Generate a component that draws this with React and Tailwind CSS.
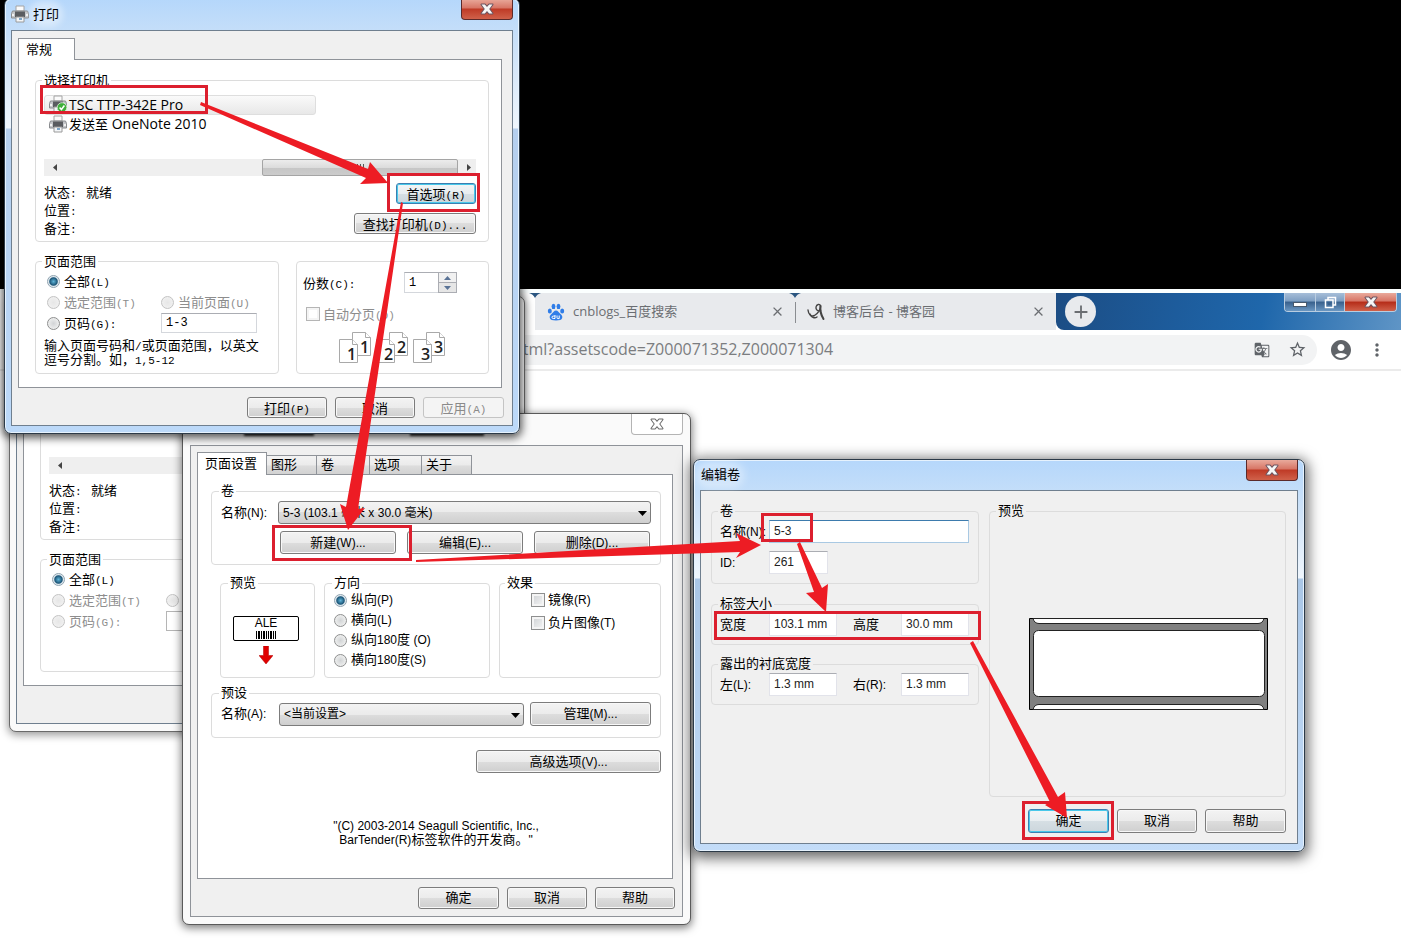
import React, { useId } from 'react';
import { MdAccountCircle, MdStarBorder, MdMoreVert, MdGTranslate, MdClose, MdAdd } from 'react-icons/md';

const SANS = "font-['Liberation_Sans','Noto_Sans_CJK_SC',sans-serif]";

/* Latin text set in the fixed-pitch face of the print dialog */
function Mono({ children }) {
  return <span className="font-['Liberation_Mono',monospace] text-[11px] leading-none">{children}</span>;
}

/* Latin text set in the proportional face of the label dialogs */
function Latin({ children }) {
  return <span className="font-['Liberation_Sans',sans-serif] text-[12px]">{children}</span>;
}

function Printer({ ready }) {
  return (
    <svg className="size-[18px] shrink-0" viewBox="0 0 18 18" aria-hidden="true">
      <path d="M5 1h8v5H5z" fill="#fbfbfb" stroke="#a4a4a4" />
      <path d="M1.500 6h15l1 2.500v4.500h-17V8.500z" fill="#c4c6c9" stroke="#8a8c8f" />
      <path d="M4 6.500h10v5.500H4z" fill="#5a5c60" />
      <path d="M1 9h2v2H1zM15 9h2v2h-2z" fill="#f2f2f2" />
      <path d="M5 12h8v5H5z" fill="#f4f6f8" stroke="#9a9a9a" />
      <path d="M8 13h3v2H8z" fill="#7fa6c8" />
      {ready && (
        <g>
          <circle cx="13" cy="12.500" r="4.800" fill="#3fae3a" stroke="#dff3dd" strokeWidth=".8" />
          <path d="M10.600 12.500l1.800 2 3-4" fill="none" stroke="#fff" strokeWidth="1.500" />
        </g>
      )}
    </svg>
  );
}

function Cross({ fill, stroke }) {
  return (
    <svg className="h-3 w-[14px]" viewBox="0 0 14 12" aria-hidden="true">
      <path
        d="M1.500 1.500h3.300L7 4l2.200-2.500h3.300L9.200 6l3.300 4.500H9.200L7 8l-2.200 2.500H1.500L4.800 6z"
        fill={fill}
        stroke={stroke}
        strokeWidth="2"
        strokeLinejoin="round"
        paintOrder="stroke"
      />
    </svg>
  );
}

function CloseButton({ active }) {
  const look = active
    ? 'border-[#5b2a2a] bg-[linear-gradient(180deg,#e9aa9c_0%,#d77565_45%,#bf3a26_50%,#d0614a_100%)]'
    : 'border-[#b4b4b4] bg-white';
  return (
    <button type="button" aria-label="关闭" className={`flex h-[21px] w-[52px] shrink-0 items-center justify-center rounded-b-[4px] border border-t-0 ${look}`}>
      {active ? <Cross fill="#f6f6f6" stroke="#6d5560" /> : <Cross fill="#ffffff" stroke="#6b6b6b" />}
    </button>
  );
}

function Button({ children, primary, disabled, className }) {
  const look = disabled
    ? 'border-[#c4c4c4] bg-[#f4f4f4] text-[#8a8a8a]'
    : primary
      ? 'border-[#3c7fb1] bg-[linear-gradient(180deg,#f2f5f6_0%,#e8edf0_50%,#d6dfe4_50%,#ccd6dc_100%)] shadow-[inset_0_0_0_1px_#48c8ea]'
      : 'border-[#7c7c7c] bg-[linear-gradient(180deg,#f3f3f3_0%,#ebebeb_50%,#dddddd_50%,#cfcfcf_100%)] shadow-[inset_0_0_0_1px_#f8f8f8]';
  return (
    <button type="button" disabled={disabled} className={`flex items-center justify-center rounded-[3px] border whitespace-nowrap ${look} ${className}`}>
      <span>{children}</span>
    </button>
  );
}

function Group({ title, className, children }) {
  return (
    <fieldset className={`rounded-[4px] border border-[#dcdcdc] ${className}`}>
      {title && <legend className="-ml-0.5 h-[18px] px-0.5 leading-[18px] whitespace-nowrap">{title}</legend>}
      {children}
    </fieldset>
  );
}

function Radio({ name, checked, disabled, children }) {
  return (
    <label className={`flex h-5 items-center gap-1 whitespace-nowrap ${disabled ? 'text-[#8d8d8d]' : ''}`}>
      <input
        type="radio"
        name={name}
        defaultChecked={checked}
        disabled={disabled}
        className="size-[13px] shrink-0 appearance-none rounded-full border border-[#8e8f8f] bg-[radial-gradient(circle,#d2d4d6_0%,#e9eaea_60%,#f8f8f8_100%)] checked:border-[#8fa3b0] checked:bg-[radial-gradient(circle,#5fb4d8_0%,#1c5678_48%,#dfe8ee_62%,#f4f6f8_100%)] disabled:border-[#c3c3c3] disabled:bg-[radial-gradient(circle,#e6e6e6_0%,#f4f4f4_100%)]"
      />
      <span>{children}</span>
    </label>
  );
}

function Check({ disabled, children }) {
  return (
    <label className={`flex h-5 items-center gap-[3px] whitespace-nowrap ${disabled ? 'text-[#8d8d8d]' : ''}`}>
      <input type="checkbox" disabled={disabled} className="size-[14px] shrink-0 appearance-none border border-[#8e8f8f] bg-[linear-gradient(135deg,#cdd0d3,#f6f6f6)] shadow-[inset_0_0_0_2px_#f4f4f4] disabled:border-[#b5b5b5] disabled:bg-none" />
      <span>{children}</span>
    </label>
  );
}

function Select({ label, option, className }) {
  return (
    <div className={`relative ${className}`}>
      <select aria-label={label} className="h-[23px] w-full appearance-none rounded-[3px] border border-[#7c7c7c] bg-[linear-gradient(180deg,#f3f3f3_0%,#ebebeb_50%,#dddddd_50%,#cfcfcf_100%)] px-1 text-[12px]">
        <option>{option}</option>
      </select>
      <svg className="pointer-events-none absolute top-[10px] right-1 h-[5px] w-[9px]" viewBox="0 0 9 5" aria-hidden="true">
        <path d="M0 0h9L4.500 5z" />
      </svg>
    </div>
  );
}

function PageStack({ n, x }) {
  return (
    <g transform={`translate(${x} 0)`}>
      <g fill="#fff" stroke="#a9a9a9">
        <path d="M13.500.5h13l5 5v18h-18z" />
        <path d="M26.500.5v5h5" />
        <path d="M.5 7.500h13l5 5v18H.5z" />
        <path d="M13.500 7.500v5h5" />
      </g>
      <g fontFamily="Open Sans, sans-serif" fontSize="16" fontWeight="600" fill="#222">
        <text x="8" y="28">{n}</text>
        <text x="21" y="21">{n}</text>
      </g>
    </g>
  );
}

function PrinterList() {
  return (
    <ul className="h-[46px] pt-1.5 font-['Open_Sans','Noto_Sans_CJK_SC',sans-serif] text-[14px]">
      <li className="flex h-5 w-[272px] items-center gap-0.5 rounded-[3px] border border-[#dedede] bg-[linear-gradient(180deg,#fafafa,#e8e8e8)] pb-0.5 pl-1">
        <Printer ready />TSC TTP-342E Pro
      </li>
      <li className="flex h-5 items-center gap-0.5 pb-0.5 pl-[5px]">
        <Printer />
        <span className="whitespace-pre"><span className="text-[13px]">发送至</span> OneNote 2010</span>
      </li>
    </ul>
  );
}

function Copies({ id }) {
  return (
    <>
      <div className="flex h-[21px] items-center">
        <label htmlFor={`${id}-copies`} className="w-[101px]">份数<Mono>(C):</Mono></label>
        <input id={`${id}-copies`} defaultValue="1" className="h-[21px] w-[34px] border border-r-0 border-[#d4d7dc] border-t-[#abadb3] px-1 font-['Liberation_Mono',monospace] text-[12px]" />
        <div className="flex h-[21px] w-[19px] flex-col border border-[#abadb3]">
          <button type="button" aria-label="增加" className="flex flex-1 items-center justify-center border-b border-[#abadb3] bg-[#f1f1f1]">
            <svg className="h-1 w-[7px]" viewBox="0 0 7 4"><path d="M0 4h7L3.500 0z" fill="#5a7396" /></svg>
          </button>
          <button type="button" aria-label="减少" className="flex flex-1 items-center justify-center bg-[#e6e6e6]">
            <svg className="h-1 w-[7px]" viewBox="0 0 7 4"><path d="M0 0h7L3.500 4z" fill="#5a7396" /></svg>
          </button>
        </div>
      </div>
      <div className="mt-[11px] pl-[3px]"><Check disabled>自动分页<Mono>(O)</Mono></Check></div>
      <svg className="mt-2 ml-[36px] h-8 w-[106px]" viewBox="0 0 106 32" aria-hidden="true">
        <PageStack n="1" x={0} /><PageStack n="2" x={37} /><PageStack n="3" x={74} />
      </svg>
    </>
  );
}

function PrintDialog({ active, className }) {
  const id = useId();
  const frame = active
    ? 'border-[#2c3a48] bg-[linear-gradient(180deg,#b5d7fb_0px,#cde2f8_50px,#eff6fd_129px,#b5cfee_130px,#bcd9f9_100%)] shadow-[inset_0_0_0_1px_#e6f2fd,0_2px_8px_2px_rgba(0,0,0,0.65)]'
    : 'border-[#6a6a6a] bg-[#fafafa] shadow-[0_2px_8px_1px_rgba(0,0,0,0.4)]';
  return (
    <section className={`absolute w-[516px] rounded-[7px] border px-1.5 pb-[7px] text-[13px] text-black ${frame} ${className} font-['Noto_Sans_CJK_SC',sans-serif]`}>
      <header className="flex h-[31px] items-start justify-between">
        {active && (
          <h2 className="flex h-[29px] items-center gap-1">
            <Printer />
            <span className="rounded-full bg-white/40 leading-[18px] shadow-[0_0_6px_4px_rgba(255,255,255,0.4)]">打印</span>
          </h2>
        )}
        <CloseButton active={active} />
      </header>
      <div className="border border-[#6f7f8f] bg-[#f0f0f0] pt-[7px] pr-2 pb-[7px] pl-1.5">
        <div role="tablist" className="flex">
          <button type="button" role="tab" className="relative z-10 -mb-px flex h-[22px] w-[57px] items-center border border-b-0 border-[#8f9399] bg-white pb-0.5 pl-[7px]">
            {active && '常规'}
          </button>
        </div>
        <div className="mr-0.5 border border-[#8f9399] bg-white pt-[11px] pr-3 pb-[13px] pl-4">
          <Group title={active ? '选择打印机' : ' '} className="pr-3 pb-1 pl-2">
            {active ? <PrinterList /> : <div className="h-[46px]" />}
            <div className="mt-6 flex h-[17px] items-center bg-[#efefef]">
              <svg className="ml-2 size-[7px]" viewBox="0 0 7 7" aria-hidden="true"><path d="M5 0v7L1 3.500z" fill="#444" /></svg>
              <div className="ml-[203px] flex h-[17px] w-[196px] items-center justify-center gap-0.5 rounded-[2px] border border-[#a5a5a5] bg-[linear-gradient(180deg,#ececec_0%,#dcdcdc_50%,#c6c6c6_55%,#cccccc_100%)]">
                <i className="h-[7px] w-px bg-[#555]" /><i className="h-[7px] w-px bg-[#555]" /><i className="h-[7px] w-px bg-[#555]" />
              </div>
              <svg className="ml-2 size-[7px]" viewBox="0 0 7 7" aria-hidden="true"><path d="M1 0v7l4-3.500z" fill="#444" /></svg>
            </div>
            <div className="mt-[7px] flex h-[54px] justify-between leading-[18px]">
              <dl className="grid grid-cols-[42px_auto] grid-rows-[18px_18px_18px]">
                <dt>状态<Mono>:</Mono></dt><dd>就绪</dd>
                <dt>位置<Mono>:</Mono></dt><dd />
                <dt>备注<Mono>:</Mono></dt><dd />
              </dl>
              {active && (
                <div className="flex flex-col items-end gap-[9px]">
                  <Button primary className="h-[21px] w-[80px]">首选项<Mono>(R)</Mono></Button>
                  <Button className="h-[21px] w-[122px]">查找打印机<Mono>(D)...</Mono></Button>
                </div>
              )}
            </div>
          </Group>
          <div className="mt-2.5 flex gap-[17px]">
            <Group title="页面范围" className="h-[122px] w-[244px] px-2">
              <div className="grid grid-cols-[114px_auto] gap-y-px pt-px pl-[3px]">
                <Radio name={id} checked>全部<Mono>(L)</Mono></Radio>
                <span />
                <Radio name={id} disabled>选定范围<Mono>(T)</Mono></Radio>
                <Radio name={id} disabled>{active && <>当前页面<Mono>(U)</Mono></>}</Radio>
                <Radio name={id} disabled={!active}>页码<Mono>(G):</Mono></Radio>
                <input aria-label="页码" defaultValue={active ? '1-3' : ''} disabled={!active} className="h-5 w-[96px] border border-[#d4d7dc] border-t-[#abadb3] bg-white px-1 font-['Liberation_Mono',monospace] text-[12px] disabled:border-[#b5b5b5]" />
              </div>
              {active && (
                <p className="mt-[5px] grid grid-rows-[14px_14px] leading-[14px] whitespace-nowrap">
                  <span>输入页面号码和<Mono>/</Mono>或页面范围，以英文</span>
                  <span>逗号分割。如，<Mono>1,5-12</Mono></span>
                </p>
              )}
            </Group>
            <Group className="mt-[9px] h-[113px] flex-1 px-1.5 pt-2.5">
              {active && <Copies id={id} />}
            </Group>
          </div>
        </div>
        <div className="mt-[9px] flex h-[21px] justify-end gap-2">
          {active && (
            <>
              <Button className="h-[21px] w-[80px]">打印<Mono>(P)</Mono></Button>
              <Button className="h-[21px] w-[80px]">取消</Button>
              <Button disabled className="h-[21px] w-[81px]">应用<Mono>(A)</Mono></Button>
            </>
          )}
        </div>
      </div>
    </section>
  );
}

function PropertiesDialog() {
  const id = useId();
  const idle = 'h-5 border border-l-0 border-[#8f9399] bg-[linear-gradient(180deg,#f3f3f3_0%,#ebebeb_50%,#dddddd_55%,#d2d2d2_100%)] pl-1 text-left leading-[18px]';
  return (
    <section className={`absolute top-[413px] left-[182px] w-[509px] rounded-[7px] border border-[#5a5a5a] bg-[#fafafa] px-[7px] pb-[7px] text-[13px] text-black shadow-[0_2px_9px_1px_rgba(0,0,0,0.5)] ${SANS}`}>
      <header className="flex h-[31px] items-start justify-between">
        <div className="mt-4 ml-[54px] flex gap-24" aria-hidden="true">
          <span className="h-1.5 w-[70px] bg-[#333] blur-[1px]" />
          <span className="h-1.5 w-[74px] bg-[#333] blur-[1px]" />
        </div>
        <CloseButton />
      </header>
      <div className="border border-[#8f9399] bg-[#f0f0f0] pt-1.5 pr-[7px] pb-[7px] pl-1.5">
        <div role="tablist" className="flex items-end">
          <button type="button" role="tab" aria-selected="true" className="relative z-10 h-[23px] w-[70px] border border-b-0 border-[#8f9399] bg-white pl-[7px] text-left whitespace-nowrap">页面设置</button>
          <button type="button" role="tab" className={`w-[50px] ${idle}`}>图形</button>
          <button type="button" role="tab" className={`w-[53px] ${idle}`}>卷</button>
          <button type="button" role="tab" className={`w-[52px] ${idle}`}>选项</button>
          <button type="button" role="tab" className={`w-[50px] ${idle}`}>关于</button>
        </div>
        <div className="-mt-px mr-0.5 border border-[#8f9399] bg-white pt-[7px] pr-[11px] pb-[31px] pl-[13px]">
          <Group title="卷" className="px-[9px] pb-2.5">
            <div className="flex items-center pt-px">
              <span className="w-[57px]">名称<Latin>(N):</Latin></span>
              <Select label="名称(N)" option="5-3 (103.1 毫米 x 30.0 毫米)" className="flex-1" />
            </div>
            <div className="mt-[7px] flex gap-[11px] pl-[59px]">
              <Button className="h-[23px] w-[116px]">新建<Latin>(W)...</Latin></Button>
              <Button className="h-[23px] w-[116px]">编辑<Latin>(E)...</Latin></Button>
              <Button className="h-[23px] w-[116px]">删除<Latin>(D)...</Latin></Button>
            </div>
          </Group>
          <div className="mt-[9px] flex gap-[9px] pl-[9px]">
            <Group title="预览" className="h-[104px] w-[95px] pr-3 pl-[9px]">
              <div className="mt-6 flex flex-col items-center">
                <div className="flex h-[25px] w-[66px] flex-col items-center rounded-[2px] border border-black pt-px">
                  <span className="text-[12px] leading-[11px]">ALE</span>
                  <svg className="mt-0.5 h-2 w-5" viewBox="0 0 20 8" aria-hidden="true">
                    <path d="M0 0h1v8H0zM2 0h2v8H2zM5 0h1v8H5zM7 0h2v8H7zM10 0h1v8h-1zM12 0h1v8h-1zM14 0h2v8h-2zM17 0h1v8h-1zM19 0h1v8h-1z" />
                  </svg>
                </div>
                <svg className="mt-[5px] h-[18px] w-[14px]" viewBox="0 0 14 18" aria-hidden="true">
                  <path d="M4.500 0h5v9.500H14L7 18 0 9.500h4.500z" fill="#e00000" stroke="#b00000" strokeWidth=".5" />
                </svg>
              </div>
            </Group>
            <Group title="方向" className="h-[104px] w-[166px] px-[9px]">
              <div className="-mt-0.5">
                <Radio name={id} checked>纵向<Latin>(P)</Latin></Radio>
                <Radio name={id}>横向<Latin>(L)</Latin></Radio>
                <Radio name={id}>纵向<Latin>180</Latin>度<Latin> (O)</Latin></Radio>
                <Radio name={id}>横向<Latin>180</Latin>度<Latin>(S)</Latin></Radio>
              </div>
            </Group>
            <Group title="效果" className="h-[104px] flex-1 px-[7px]">
              <div className="-mt-0.5 flex flex-col gap-[3px] pl-6">
                <Check>镜像<Latin>(R)</Latin></Check>
                <Check>负片图像<Latin>(T)</Latin></Check>
              </div>
            </Group>
          </div>
          <Group title="预设" className="mt-1.5 px-[9px] pb-[11px]">
            <div className="flex h-6 items-center">
              <span className="w-[58px]">名称<Latin>(A):</Latin></span>
              <Select label="名称(A)" option="<当前设置>" className="w-[245px]" />
              <Button className="ml-1.5 h-6 w-[121px]">管理<Latin>(M)...</Latin></Button>
            </div>
          </Group>
          <div className="mt-3 flex justify-end">
            <Button className="h-[23px] w-[185px]">高级选项<Latin>(V)...</Latin></Button>
          </div>
          <p className="mt-[46px] text-center leading-[14px]">
            <Latin>"(C) 2003-2014 Seagull Scientific, Inc.,</Latin><br />
            <Latin>BarTender(R)</Latin>标签软件的开发商。<Latin>"</Latin>
          </p>
        </div>
        <div className="mt-2 flex justify-end gap-2">
          <Button className="h-[22px] w-[81px]">确定</Button>
          <Button className="h-[22px] w-[80px]">取消</Button>
          <Button className="h-[22px] w-[80px]">帮助</Button>
        </div>
      </div>
    </section>
  );
}

function Field({ label, value, className, focus }) {
  return (
    <input
      aria-label={label}
      defaultValue={value}
      className={`h-[23px] border bg-white px-1 pb-0.5 text-[12px] text-[#222] ${focus ? 'border-[#a9c9e3] border-t-[#3d7bad]' : 'border-[#e2e3ea] border-t-[#abadb3]'} ${className}`}
    />
  );
}

function RollDialog() {
  return (
    <section className={`absolute top-[459px] left-[693px] w-[612px] rounded-[7px] border border-[#2c3a48] bg-[linear-gradient(180deg,#b5d7fb_0px,#cde2f8_50px,#eff6fd_118px,#a9c6e6_119px,#c3dcf8_100%)] px-1.5 pb-[7px] text-[13px] text-black shadow-[inset_0_0_0_1px_#e6f2fd,0_3px_14px_3px_rgba(0,0,0,0.6)] ${SANS}`}>
      <header className="flex h-[30px] items-start justify-between">
        <h2 className="mt-1.5 rounded-full bg-white/30 pl-px leading-[18px] shadow-[0_0_8px_4px_rgba(255,255,255,0.4)]">编辑卷</h2>
        <CloseButton active />
      </header>
      <div className="border border-[#6f7f8f] bg-[#f0f0f0] pt-[11px] pr-[11px] pb-2.5 pl-2.5">
        <div className="flex items-stretch gap-2.5">
          <div className="flex w-[268px] flex-col">
            <Group title="卷" className="px-2 pb-[9px]">
              <div className="flex items-center">
                <span className="w-[49px] whitespace-nowrap">名称<Latin>(N):</Latin></span>
                <Field label="名称(N)" value="5-3" focus className="relative w-[200px]" />
              </div>
              <div className="mt-2 flex items-center">
                <span className="w-[49px]"><Latin>ID:</Latin></span>
                <Field label="ID" value="261" className="w-[59px]" />
              </div>
            </Group>
            <Group title="标签大小" className="mt-[11px] px-2 pb-2">
              <div className="flex items-center">
                <span className="w-[49px]">宽度</span>
                <Field label="宽度" value="103.1 mm" className="w-[68px]" />
                <span className="ml-4 w-[48px]">高度</span>
                <Field label="高度" value="30.0 mm" className="w-[68px]" />
              </div>
            </Group>
            <Group title="露出的衬底宽度" className="mt-2.5 px-2 pb-2">
              <div className="flex items-center">
                <span className="w-[49px]">左<Latin>(L):</Latin></span>
                <Field label="左(L)" value="1.3 mm" className="w-[68px]" />
                <span className="ml-4 w-[48px]">右<Latin>(R):</Latin></span>
                <Field label="右(R)" value="1.3 mm" className="w-[68px]" />
              </div>
            </Group>
          </div>
          <Group title="预览" className="h-[295px] flex-1 px-2">
            <svg className="mt-[98px] ml-[31px] h-[92px] w-[239px]" viewBox="0 0 239 92" aria-hidden="true">
              <path d="M.5.5h238v91H.5z" fill="#808080" stroke="#000" />
              <path d="M4 .5c1 3.500 3 5 6 5h219c3 0 5-1.500 6-5z" fill="#fff" stroke="#222" />
              <path d="M4 91.500c1-3.500 3-5 6-5h219c3 0 5 1.500 6 5z" fill="#fff" stroke="#222" />
              <rect x="4.500" y="12.500" width="231" height="66" rx="5" fill="#fff" stroke="#222" />
            </svg>
          </Group>
        </div>
        <div className="mt-3 flex justify-end gap-2">
          <Button primary className="h-6 w-[81px]">确定</Button>
          <Button className="h-6 w-[80px]">取消</Button>
          <Button className="h-6 w-[81px]">帮助</Button>
        </div>
      </div>
    </section>
  );
}

function TabNotch() {
  return (
    <svg className="h-[5px] w-3 shrink-0 self-start" viewBox="0 0 12 5" aria-hidden="true">
      <path d="M0 0h12Q8 1 6 5 4 1 0 0z" fill="#2a5580" />
    </svg>
  );
}

function Browser() {
  return (
    <div className="bg-white font-['Open_Sans','Noto_Sans_CJK_SC',sans-serif] text-[#6b6e72]">
      <div className="flex h-[37px] bg-white pl-[529px]">
        <div className="flex w-[527px] shrink-0 bg-[linear-gradient(90deg,#ffffff_6px,#e8eaed_6px)] text-[13px]">
          <TabNotch />
          <div className="flex w-[248px] shrink-0 items-center pl-1.5">
            <svg className="size-[18px]" viewBox="0 0 18 18" aria-hidden="true">
              <g fill="#2f7de8">
                <ellipse cx="2.800" cy="8" rx="2" ry="2.600" />
                <ellipse cx="6.500" cy="3.400" rx="1.900" ry="2.700" />
                <ellipse cx="11.500" cy="3.400" rx="1.900" ry="2.700" />
                <ellipse cx="15.200" cy="8" rx="2" ry="2.600" />
                <path d="M9 7.500c2 0 2.800 2 4.300 3.300 1.500 1.200 2.400 2.600 1.900 4.300-.6 2-2.600 2.300-6.200 2.300s-5.600-.3-6.200-2.300c-.5-1.700.4-3.100 1.900-4.300C6.200 9.500 7 7.500 9 7.500z" />
              </g>
              <path d="M8 12v3.500H6.200a1.200 1.200 0 010-2.400H8M10 12.500v2.300q0 .8.800.8h1.400v-3.100" fill="none" stroke="#fff" />
            </svg>
            <span className="ml-2 flex-1">cnblogs_百度搜索</span>
            <button type="button" aria-label="关闭标签页" className="mr-1"><MdClose className="size-[15px]" /></button>
          </div>
          <div className="-mr-1.5 flex flex-col items-center">
            <TabNotch />
            <i className="mt-1 h-[21px] w-px bg-[#8a8d91]" />
          </div>
          <div className="flex flex-1 items-center pl-3">
            <svg className="size-[18px]" viewBox="0 0 18 18" aria-hidden="true">
              <g fill="none" stroke="#444" strokeWidth="1.400" strokeLinecap="round">
                <path d="M1 7c.5 5 3.500 7 6.500 5.500C11 10.500 14 6 13.500 3 13 .5 9.500 1 9 4s2 4.500 4.500 3.500" />
                <path d="M13.500 3c-.5 4 .5 9 3 13" strokeWidth="2" />
                <path d="M3 11c1.500 4 5 4.500 7 3" />
              </g>
            </svg>
            <span className="ml-2 flex-1">博客后台 - 博客园</span>
            <button type="button" aria-label="关闭标签页" className="mr-2.5"><MdClose className="size-[15px]" /></button>
          </div>
        </div>
        <div className="flex flex-1 items-center justify-between rounded-bl-[8px] bg-[linear-gradient(100deg,#1c4d84_0%,#1d5c9c_35%,#1f67ab_60%,#5f95c6_100%)]">
          <button type="button" aria-label="新标签页" className="ml-[9px] flex size-[31px] items-center justify-center rounded-full bg-[#e8eaed]">
            <MdAdd className="size-[22px]" />
          </button>
          <div className="mr-1 flex h-[19px] self-start overflow-hidden rounded-b-[4px] border border-t-0 border-[#b9cde0]">
            <button type="button" aria-label="最小化" className="flex w-[31px] items-end justify-center border-r border-[#b9cde0] bg-[linear-gradient(180deg,#a5bed8_0%,#7d9fc3_45%,#38608c_50%,#6a97c2_100%)] pb-1">
              <i className="h-[5px] w-[14px] border border-[#46586c] bg-white" />
            </button>
            <button type="button" aria-label="还原" className="flex w-[29px] items-center justify-center border-r border-[#b9cde0] bg-[linear-gradient(180deg,#a5bed8_0%,#7d9fc3_45%,#38608c_50%,#6a97c2_100%)]">
              <svg className="size-[13px]" viewBox="0 0 13 13"><path d="M4 4V1.500h7.500V9H9M1.500 4H9v7.500H1.500z" fill="none" stroke="#fff" strokeWidth="1.500" /><path d="M4 6.500h2.500V9H4z" fill="#38608c" /></svg>
            </button>
            <button type="button" aria-label="关闭" className="flex w-[51px] items-center justify-center bg-[linear-gradient(180deg,#e9aa9c_0%,#d77565_45%,#b52c18_50%,#d0614a_100%)]">
              <Cross fill="#f6f6f6" stroke="#6d5560" />
            </button>
          </div>
        </div>
      </div>
      <div className="flex h-[41px] items-center border-b-2 border-[#ebebeb] pr-[14px] pl-[513px]">
        <div className="flex h-[30px] flex-1 items-center rounded-r-full bg-[#f2f3f4] pr-2.5">
          <input aria-label="地址" defaultValue="html?assetscode=Z000071352,Z000071304" className="h-6 min-w-0 flex-1 bg-transparent pb-0.5 text-[16px] text-[#7b7d80]" />
          <MdGTranslate className="size-4 text-[#5f6368]" />
          <MdStarBorder className="ml-[18px] size-[19px] text-[#5f6368]" />
        </div>
        <MdAccountCircle className="ml-3 size-6 text-[#5f6368]" />
        <MdMoreVert className="ml-3.5 size-5 text-[#5f6368]" />
      </div>
    </div>
  );
}

function Annotations() {
  return (
    <svg className="pointer-events-none absolute top-0 left-0 z-20 size-px overflow-visible" aria-hidden="true">
      <g fill="none" stroke="#dc1f2e" strokeWidth="3">
        <rect x="41.500" y="86.500" width="165" height="26" />
        <rect x="388.500" y="174.500" width="90" height="36" />
        <rect x="273.500" y="526.500" width="137" height="33" />
        <rect x="762.500" y="514.500" width="49" height="26" />
        <rect x="715.500" y="612.500" width="264" height="26" />
        <rect x="1023.500" y="802.500" width="89" height="36" />
      </g>
      <g fill="#ed1c24">
        <path d="M201 102L368 169 370 162 388 183 360 184 366 178 200 105z" />
        <path d="M401 202L346 507 340 504 348 530 365 508 358 509 403 203z" />
        <path d="M416 560L740 541 736 533 761 545 736 558 740 552 416 562z" />
        <path d="M797 544L814 592 806 593 826 612 828 584 822 588 800 542z" />
        <path d="M970 643L1050 802 1045 805 1067 818 1065 792 1058 797 973 641z" />
      </g>
    </svg>
  );
}

export default function App() {
  return (
    <main className="relative min-h-screen w-full overflow-hidden bg-white">
      <div className="h-[289px] bg-black" />
      <div className="h-1 bg-[#fbffff]" />
      <Browser />
      <PrintDialog className="top-[296px] left-[9px]" />
      <PropertiesDialog />
      <RollDialog />
      <PrintDialog active className="-top-0.5 left-1 z-10" />
      <Annotations />
    </main>
  );
}
